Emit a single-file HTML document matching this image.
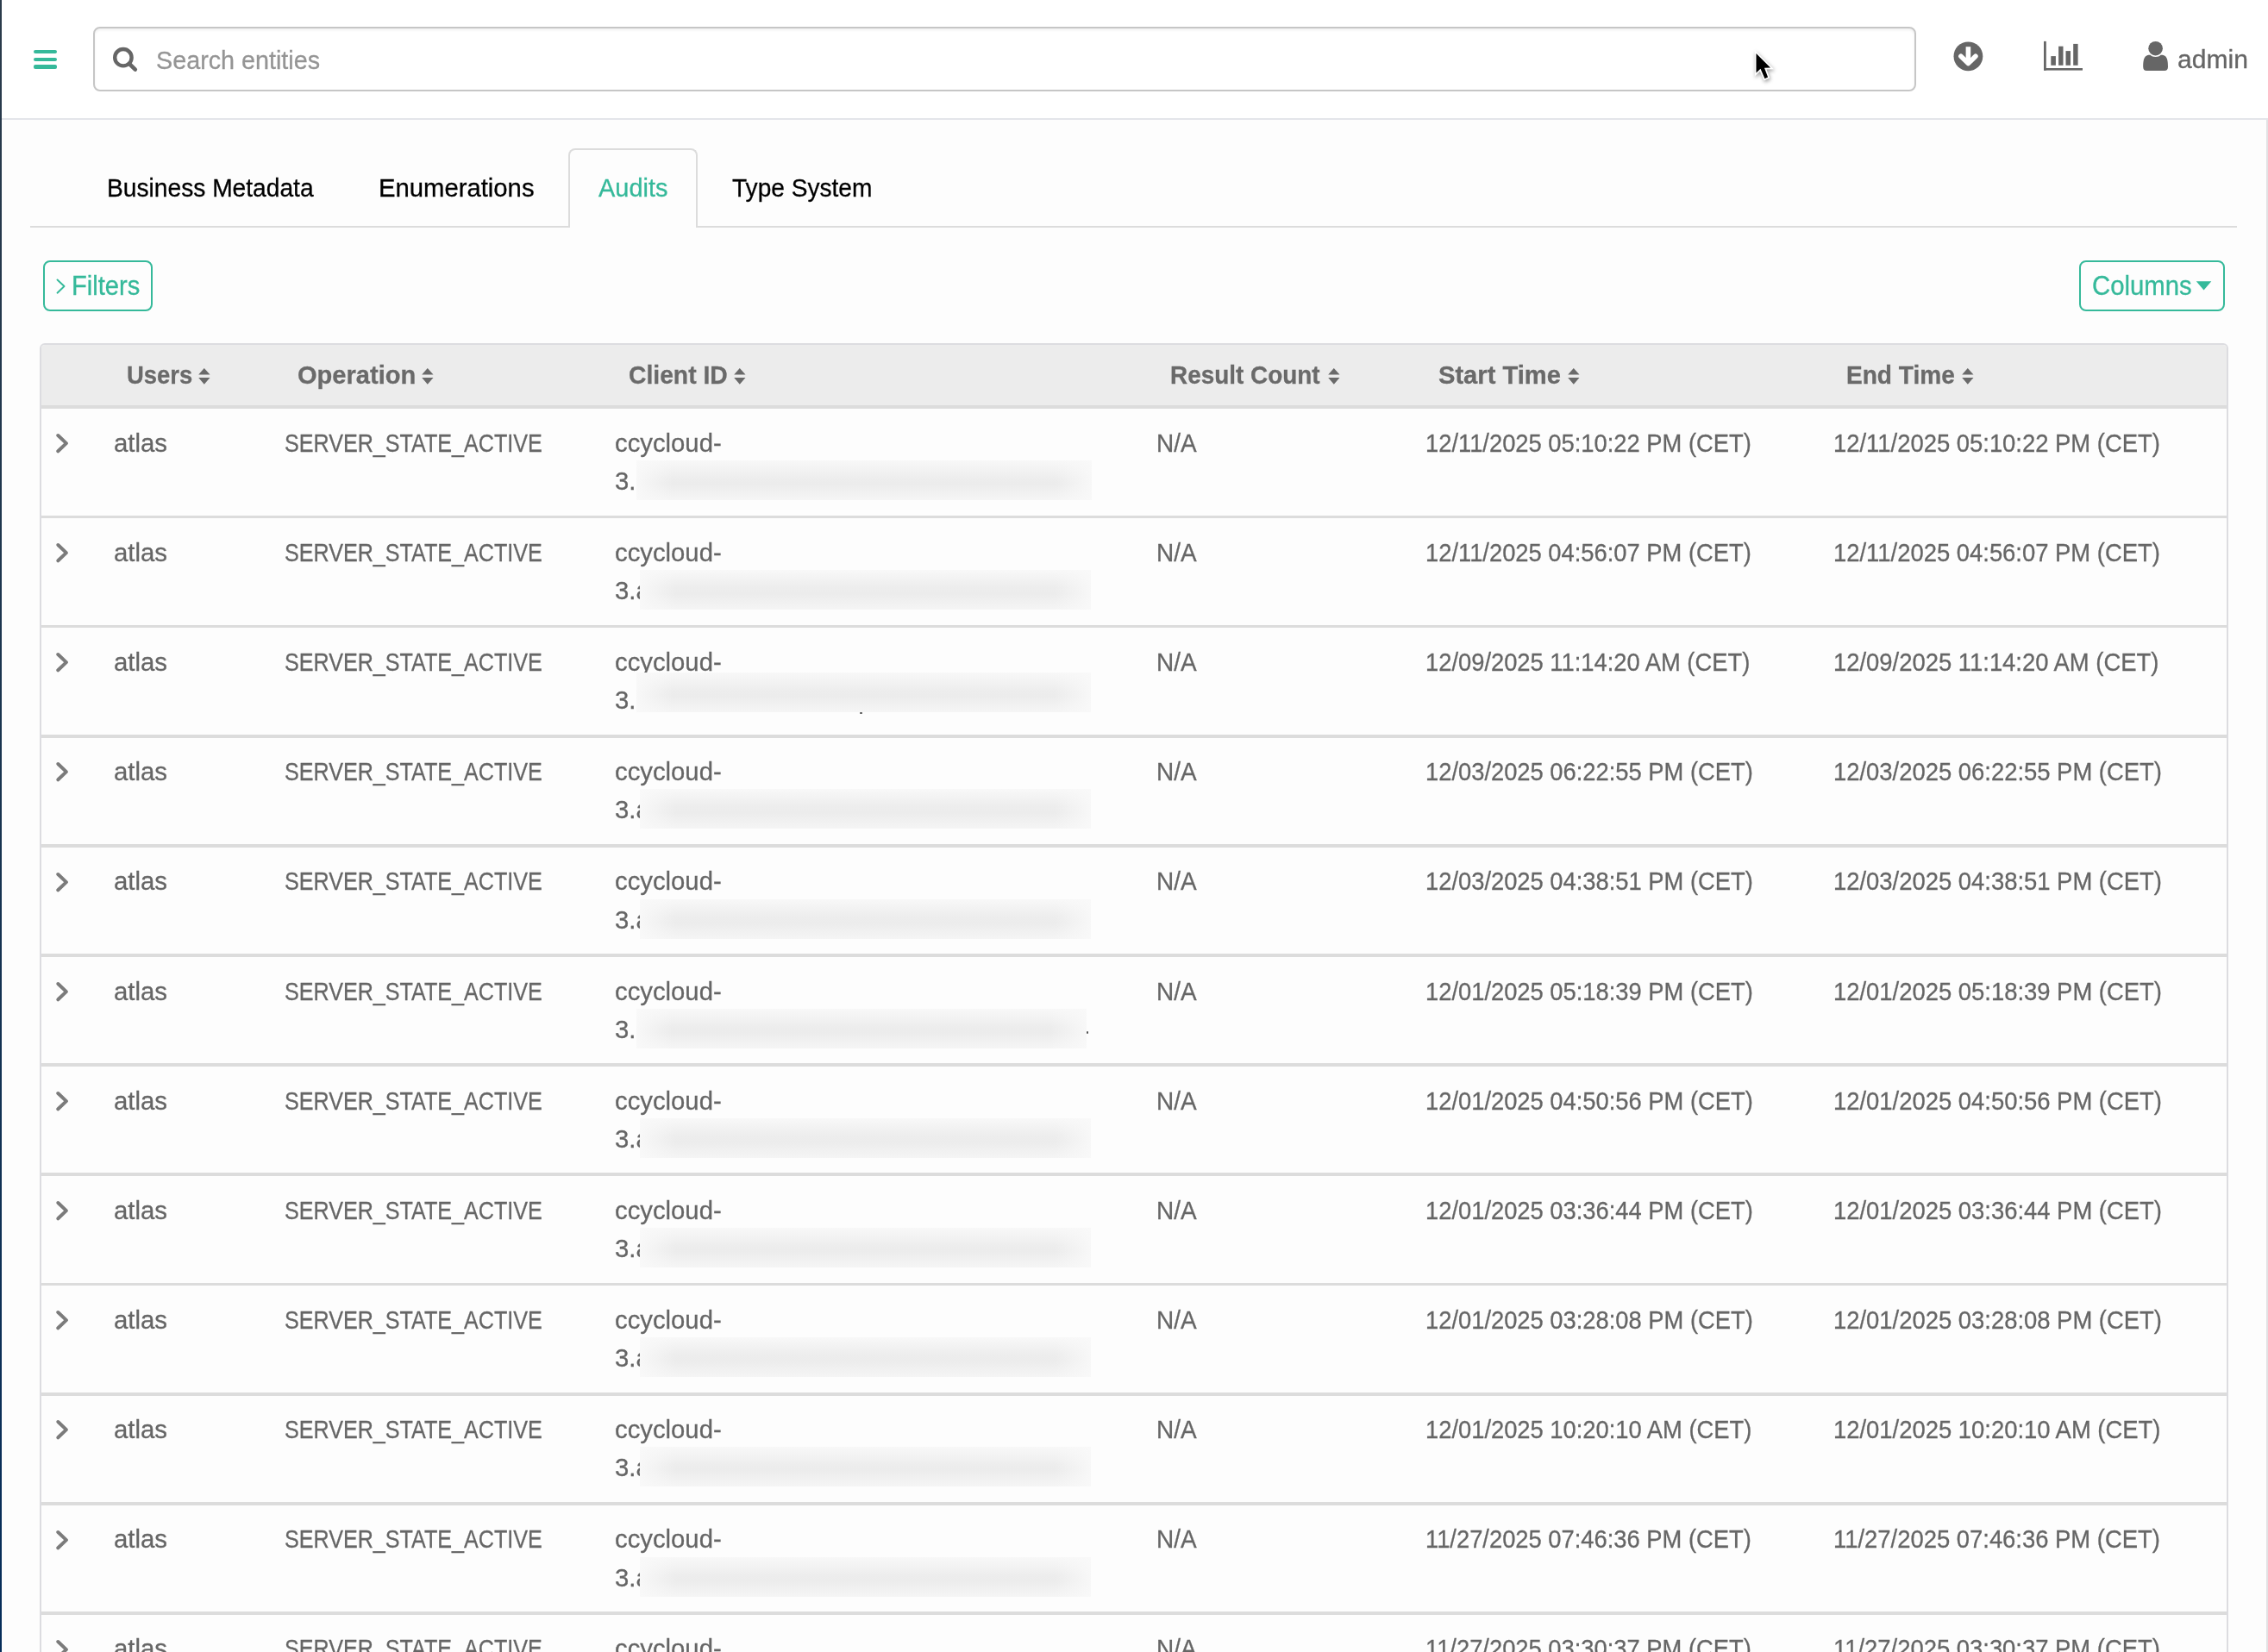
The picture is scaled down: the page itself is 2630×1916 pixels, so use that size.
<!DOCTYPE html>
<html><head><meta charset="utf-8"><title>Audits</title>
<style>
html,body{margin:0;padding:0;}
body{width:2630px;height:1916px;position:relative;overflow:hidden;background:#fff;font-family:"Liberation Sans", sans-serif;}
.t{position:absolute;white-space:nowrap;line-height:1;transform-origin:0 0;font-family:"Liberation Sans", sans-serif;-webkit-text-stroke:0.3px currentColor;}
.leftbar{position:absolute;left:0;top:0;width:2px;height:1916px;background:linear-gradient(#2b3b4b,#183450 50%,#062d5a);}
.rightbar{position:absolute;left:2628px;top:139px;width:1.5px;height:1777px;background:#e2e2e4;}
.hdrline{position:absolute;left:2px;top:137px;width:2628px;height:2px;background:#e3e5ea;}
.ham{position:absolute;left:39px;width:27px;height:4.6px;border-radius:2px;background:#35b99a;}
.search{position:absolute;left:108px;top:31px;width:2110px;height:70.5px;border:2px solid #c6c6c6;border-radius:8px;box-shadow:inset 0 2px 3px rgba(0,0,0,0.06);}
.tabline{position:absolute;left:35px;top:261.5px;width:2559px;height:2px;background:#dcdcdc;}
.tabbox{position:absolute;left:658.5px;top:172px;width:146px;height:89.5px;border:2px solid #dcdcdc;border-bottom:none;border-radius:8px 8px 0 0;background:#fdfdfd;}
.btn{position:absolute;top:302.2px;height:54.6px;border:2px solid #35b99a;border-radius:8px;}
.table{position:absolute;left:46px;top:398px;width:2534px;height:1600px;border:2px solid #dcdce0;border-radius:6px 6px 0 0;}
.thead{position:absolute;left:48px;top:400px;width:2534px;height:70px;background:#ececec;border-radius:4px 4px 0 0;}
.thline{position:absolute;left:48px;top:470px;width:2534px;height:3.8px;background:#dcdcdc;}
.sep{position:absolute;left:48px;width:2534px;height:3.8px;background:#dcdcdc;}
.chev,.sort{position:absolute;}
.blur{position:absolute;background:linear-gradient(to right,rgba(249,249,249,0.9),rgba(249,249,249,0) 8%,rgba(249,249,249,0) 92%,rgba(249,249,249,0.9)),linear-gradient(to bottom,#f8f8f8,#ededed 45%,#ececec 60%,#f5f5f5);}
</style></head><body>
<div style="position:absolute;left:0;top:139px;width:2630px;height:1777px;background:#fdfdfd"></div>
<div class="leftbar"></div>
<div class="hdrline"></div>
<div class="rightbar"></div>
<div class="ham" style="top:57.8px"></div>
<div class="ham" style="top:66.6px"></div>
<div class="ham" style="top:75.4px"></div>
<div class="search"></div>
<svg style="position:absolute;left:125px;top:49px" width="40" height="40" viewBox="0 0 40 40"><circle cx="17.9" cy="17.7" r="9.7" fill="none" stroke="#666" stroke-width="4.4"/><path d="M25 25 L31.8 31.6" stroke="#666" stroke-width="4.6" stroke-linecap="round"/></svg>
<svg style="position:absolute;left:2265px;top:47.5px" width="35" height="35" viewBox="0 0 35 35"><circle cx="17.4" cy="17.3" r="16.9" fill="#666"/><path d="M17.4 6.2 V24" stroke="#fff" stroke-width="5.6" stroke-linecap="butt"/><path d="M8.9 17.2 L17.4 25.6 L25.9 17.2" fill="none" stroke="#fff" stroke-width="5.6" stroke-linecap="round" stroke-linejoin="round"/></svg>
<svg style="position:absolute;left:2369px;top:47px" width="48" height="36" viewBox="0 0 48 36"><rect x="1" y="0.9" width="2.8" height="33.7" fill="#666"/><rect x="1" y="32" width="45" height="2.6" fill="#666"/><rect x="9.3" y="18.1" width="5.6" height="10.7" fill="#666"/><rect x="18.1" y="6.7" width="5.4" height="22.1" fill="#666"/><rect x="26.5" y="12.1" width="5.5" height="16.7" fill="#666"/><rect x="35.2" y="3.9" width="5.4" height="24.9" fill="#666"/></svg>
<svg style="position:absolute;left:2484px;top:47px" width="32" height="36" viewBox="0 0 32 36"><path d="M1.2 30.5 C1.2 24 2 20 4.5 18 C6 16.8 8 16.6 9.5 16.8 C11 18.3 13 19 15.6 19 C18.2 19 20.2 18.3 21.7 16.8 C23.2 16.6 25.2 16.8 26.7 18 C29.2 20 30 24 30 30.5 C30 33.5 28.5 35 26 35 L5.2 35 C2.7 35 1.2 33.5 1.2 30.5 Z" fill="#666"/><circle cx="15.6" cy="9.2" r="8.3" fill="#666"/></svg>
<div class="tabline"></div>
<div class="tabbox"></div>
<div class="btn" style="left:50.1px;width:122.7px"></div>
<svg style="position:absolute;left:62px;top:320px" width="18" height="24" viewBox="0 0 18 24"><path d="M4.5 4.5 L12.5 12 L4.5 19.7" fill="none" stroke="#35b99a" stroke-width="1.9" stroke-linecap="round" stroke-linejoin="round"/></svg>
<div class="btn" style="left:2411.2px;width:164.6px"></div>
<svg style="position:absolute;left:2545px;top:324px" width="22" height="14" viewBox="0 0 22 14"><path d="M1.8 2.3 L19.3 2.3 L10.55 12.4 Z" fill="#35b99a"/></svg>
<div class="table"></div>
<div class="thead"></div>
<div class="thline"></div>
<svg class="sort" style="left:229.80px;top:426px" width="14" height="20" viewBox="0 0 14 20"><path d="M0.2 8.5 L6.8 0.9 L13.5 8.5 Z M0.2 12 L13.5 12 L6.8 19.8 Z" fill="#6a6a6a"/></svg><svg class="sort" style="left:488.90px;top:426px" width="14" height="20" viewBox="0 0 14 20"><path d="M0.2 8.5 L6.8 0.9 L13.5 8.5 Z M0.2 12 L13.5 12 L6.8 19.8 Z" fill="#6a6a6a"/></svg><svg class="sort" style="left:850.80px;top:426px" width="14" height="20" viewBox="0 0 14 20"><path d="M0.2 8.5 L6.8 0.9 L13.5 8.5 Z M0.2 12 L13.5 12 L6.8 19.8 Z" fill="#6a6a6a"/></svg><svg class="sort" style="left:1539.60px;top:426px" width="14" height="20" viewBox="0 0 14 20"><path d="M0.2 8.5 L6.8 0.9 L13.5 8.5 Z M0.2 12 L13.5 12 L6.8 19.8 Z" fill="#6a6a6a"/></svg><svg class="sort" style="left:1817.60px;top:426px" width="14" height="20" viewBox="0 0 14 20"><path d="M0.2 8.5 L6.8 0.9 L13.5 8.5 Z M0.2 12 L13.5 12 L6.8 19.8 Z" fill="#6a6a6a"/></svg><svg class="sort" style="left:2274.90px;top:426px" width="14" height="20" viewBox="0 0 14 20"><path d="M0.2 8.5 L6.8 0.9 L13.5 8.5 Z M0.2 12 L13.5 12 L6.8 19.8 Z" fill="#6a6a6a"/></svg>
<div class="t" style="left:181.14px;top:54.60px;font-size:30px;color:#959595;transform:scaleX(0.9579)">Search entities</div>
<div class="t" style="left:2524.90px;top:53.90px;font-size:30px;color:#666;transform:scaleX(1.0038)">admin</div>
<div class="t" style="left:123.92px;top:203.20px;font-size:30px;color:#000;transform:scaleX(0.9391)">Business Metadata</div>
<div class="t" style="left:438.95px;top:203.20px;font-size:30px;color:#000;transform:scaleX(0.9753)">Enumerations</div>
<div class="t" style="left:693.70px;top:203.20px;font-size:30px;color:#35b99a;transform:scaleX(0.9651)">Audits</div>
<div class="t" style="left:848.66px;top:203.20px;font-size:30px;color:#000;transform:scaleX(0.9363)">Type System</div>
<div class="t" style="left:82.62px;top:316.37px;font-size:31px;color:#35b99a;transform:scaleX(0.9402)">Filters</div>
<div class="t" style="left:2425.91px;top:316.47px;font-size:31px;color:#35b99a;transform:scaleX(0.9462)">Columns</div>
<div class="t" style="left:146.87px;top:420.40px;font-size:30px;font-weight:700;color:#6a6a6a;transform:scaleX(0.9137)">Users</div>
<div class="t" style="left:344.63px;top:420.40px;font-size:30px;font-weight:700;color:#6a6a6a;transform:scaleX(0.9691)">Operation</div>
<div class="t" style="left:728.66px;top:420.40px;font-size:30px;font-weight:700;color:#6a6a6a;transform:scaleX(0.9425)">Client ID</div>
<div class="t" style="left:1356.64px;top:420.40px;font-size:30px;font-weight:700;color:#6a6a6a;transform:scaleX(0.9297)">Result Count</div>
<div class="t" style="left:1667.93px;top:420.40px;font-size:30px;font-weight:700;color:#6a6a6a;transform:scaleX(0.9708)">Start Time</div>
<div class="t" style="left:2141.43px;top:420.40px;font-size:30px;font-weight:700;color:#6a6a6a;transform:scaleX(0.9356)">End Time</div>
<svg class="chev" style="left:60px;top:500.00px" width="24" height="28" viewBox="0 0 24 28"><path d="M7.3 5.0 L16.9 14.1 L7.3 23.3" fill="none" stroke="#7b7b7b" stroke-width="4" stroke-linecap="round" stroke-linejoin="round"/></svg>
<div class="t" style="left:131.82px;top:498.70px;font-size:30px;color:#666;transform:scaleX(0.9787)">atlas</div>
<div class="t" style="left:329.76px;top:498.70px;font-size:30px;color:#666;transform:scaleX(0.8375)">SERVER_STATE_ACTIVE</div>
<div class="t" style="left:712.82px;top:498.70px;font-size:30px;color:#666;transform:scaleX(0.9760)">ccycloud-</div>
<div class="t" style="left:712.82px;top:542.90px;font-size:30px;color:#666;transform:scaleX(0.9760)">3.a</div>
<div class="blur" style="left:738px;top:534.00px;width:528px;height:46px"></div>
<div class="t" style="left:1341.04px;top:498.70px;font-size:30px;color:#666;transform:scaleX(0.9313)">N/A</div>
<div class="t" style="left:1653.18px;top:498.70px;font-size:30px;color:#666;transform:scaleX(0.9109)">12/11/2025 05:10:22 PM (CET)</div>
<div class="t" style="left:2126.17px;top:498.70px;font-size:30px;color:#666;transform:scaleX(0.9137)">12/11/2025 05:10:22 PM (CET)</div>
<div class="sep" style="top:597.50px"></div>
<svg class="chev" style="left:60px;top:627.16px" width="24" height="28" viewBox="0 0 24 28"><path d="M7.3 5.0 L16.9 14.1 L7.3 23.3" fill="none" stroke="#7b7b7b" stroke-width="4" stroke-linecap="round" stroke-linejoin="round"/></svg>
<div class="t" style="left:131.82px;top:625.86px;font-size:30px;color:#666;transform:scaleX(0.9787)">atlas</div>
<div class="t" style="left:329.76px;top:625.86px;font-size:30px;color:#666;transform:scaleX(0.8375)">SERVER_STATE_ACTIVE</div>
<div class="t" style="left:712.82px;top:625.86px;font-size:30px;color:#666;transform:scaleX(0.9760)">ccycloud-</div>
<div class="t" style="left:712.82px;top:670.06px;font-size:30px;color:#666;transform:scaleX(0.9760)">3.a</div>
<div class="blur" style="left:742px;top:661.16px;width:523px;height:46px"></div>
<div class="t" style="left:1341.04px;top:625.86px;font-size:30px;color:#666;transform:scaleX(0.9313)">N/A</div>
<div class="t" style="left:1653.18px;top:625.86px;font-size:30px;color:#666;transform:scaleX(0.9109)">12/11/2025 04:56:07 PM (CET)</div>
<div class="t" style="left:2126.17px;top:625.86px;font-size:30px;color:#666;transform:scaleX(0.9137)">12/11/2025 04:56:07 PM (CET)</div>
<div class="sep" style="top:724.66px"></div>
<svg class="chev" style="left:60px;top:754.32px" width="24" height="28" viewBox="0 0 24 28"><path d="M7.3 5.0 L16.9 14.1 L7.3 23.3" fill="none" stroke="#7b7b7b" stroke-width="4" stroke-linecap="round" stroke-linejoin="round"/></svg>
<div class="t" style="left:131.82px;top:753.02px;font-size:30px;color:#666;transform:scaleX(0.9787)">atlas</div>
<div class="t" style="left:329.76px;top:753.02px;font-size:30px;color:#666;transform:scaleX(0.8375)">SERVER_STATE_ACTIVE</div>
<div class="t" style="left:712.82px;top:753.02px;font-size:30px;color:#666;transform:scaleX(0.9760)">ccycloud-</div>
<div class="t" style="left:712.82px;top:797.22px;font-size:30px;color:#666;transform:scaleX(0.9760)">3.a</div>
<div class="blur" style="left:738px;top:779.72px;width:527px;height:46px"></div>
<div class="t" style="left:1341.04px;top:753.02px;font-size:30px;color:#666;transform:scaleX(0.9313)">N/A</div>
<div class="t" style="left:1653.18px;top:753.02px;font-size:30px;color:#666;transform:scaleX(0.9109)">12/09/2025 11:14:20 AM (CET)</div>
<div class="t" style="left:2126.17px;top:753.02px;font-size:30px;color:#666;transform:scaleX(0.9137)">12/09/2025 11:14:20 AM (CET)</div>
<div class="sep" style="top:851.82px"></div>
<svg class="chev" style="left:60px;top:881.48px" width="24" height="28" viewBox="0 0 24 28"><path d="M7.3 5.0 L16.9 14.1 L7.3 23.3" fill="none" stroke="#7b7b7b" stroke-width="4" stroke-linecap="round" stroke-linejoin="round"/></svg>
<div class="t" style="left:131.82px;top:880.18px;font-size:30px;color:#666;transform:scaleX(0.9787)">atlas</div>
<div class="t" style="left:329.76px;top:880.18px;font-size:30px;color:#666;transform:scaleX(0.8375)">SERVER_STATE_ACTIVE</div>
<div class="t" style="left:712.82px;top:880.18px;font-size:30px;color:#666;transform:scaleX(0.9760)">ccycloud-</div>
<div class="t" style="left:712.82px;top:924.38px;font-size:30px;color:#666;transform:scaleX(0.9760)">3.a</div>
<div class="blur" style="left:742px;top:915.48px;width:523px;height:46px"></div>
<div class="t" style="left:1341.04px;top:880.18px;font-size:30px;color:#666;transform:scaleX(0.9313)">N/A</div>
<div class="t" style="left:1653.18px;top:880.18px;font-size:30px;color:#666;transform:scaleX(0.9109)">12/03/2025 06:22:55 PM (CET)</div>
<div class="t" style="left:2126.17px;top:880.18px;font-size:30px;color:#666;transform:scaleX(0.9137)">12/03/2025 06:22:55 PM (CET)</div>
<div class="sep" style="top:978.98px"></div>
<svg class="chev" style="left:60px;top:1008.64px" width="24" height="28" viewBox="0 0 24 28"><path d="M7.3 5.0 L16.9 14.1 L7.3 23.3" fill="none" stroke="#7b7b7b" stroke-width="4" stroke-linecap="round" stroke-linejoin="round"/></svg>
<div class="t" style="left:131.82px;top:1007.34px;font-size:30px;color:#666;transform:scaleX(0.9787)">atlas</div>
<div class="t" style="left:329.76px;top:1007.34px;font-size:30px;color:#666;transform:scaleX(0.8375)">SERVER_STATE_ACTIVE</div>
<div class="t" style="left:712.82px;top:1007.34px;font-size:30px;color:#666;transform:scaleX(0.9760)">ccycloud-</div>
<div class="t" style="left:712.82px;top:1051.54px;font-size:30px;color:#666;transform:scaleX(0.9760)">3.a</div>
<div class="blur" style="left:742px;top:1042.64px;width:523px;height:46px"></div>
<div class="t" style="left:1341.04px;top:1007.34px;font-size:30px;color:#666;transform:scaleX(0.9313)">N/A</div>
<div class="t" style="left:1653.18px;top:1007.34px;font-size:30px;color:#666;transform:scaleX(0.9109)">12/03/2025 04:38:51 PM (CET)</div>
<div class="t" style="left:2126.17px;top:1007.34px;font-size:30px;color:#666;transform:scaleX(0.9137)">12/03/2025 04:38:51 PM (CET)</div>
<div class="sep" style="top:1106.14px"></div>
<svg class="chev" style="left:60px;top:1135.80px" width="24" height="28" viewBox="0 0 24 28"><path d="M7.3 5.0 L16.9 14.1 L7.3 23.3" fill="none" stroke="#7b7b7b" stroke-width="4" stroke-linecap="round" stroke-linejoin="round"/></svg>
<div class="t" style="left:131.82px;top:1134.50px;font-size:30px;color:#666;transform:scaleX(0.9787)">atlas</div>
<div class="t" style="left:329.76px;top:1134.50px;font-size:30px;color:#666;transform:scaleX(0.8375)">SERVER_STATE_ACTIVE</div>
<div class="t" style="left:712.82px;top:1134.50px;font-size:30px;color:#666;transform:scaleX(0.9760)">ccycloud-</div>
<div class="t" style="left:712.82px;top:1178.70px;font-size:30px;color:#666;transform:scaleX(0.9760)">3.a</div>
<div class="blur" style="left:738px;top:1170.00px;width:522px;height:46px"></div>
<div class="t" style="left:1341.04px;top:1134.50px;font-size:30px;color:#666;transform:scaleX(0.9313)">N/A</div>
<div class="t" style="left:1653.18px;top:1134.50px;font-size:30px;color:#666;transform:scaleX(0.9109)">12/01/2025 05:18:39 PM (CET)</div>
<div class="t" style="left:2126.17px;top:1134.50px;font-size:30px;color:#666;transform:scaleX(0.9137)">12/01/2025 05:18:39 PM (CET)</div>
<div class="sep" style="top:1233.30px"></div>
<svg class="chev" style="left:60px;top:1262.96px" width="24" height="28" viewBox="0 0 24 28"><path d="M7.3 5.0 L16.9 14.1 L7.3 23.3" fill="none" stroke="#7b7b7b" stroke-width="4" stroke-linecap="round" stroke-linejoin="round"/></svg>
<div class="t" style="left:131.82px;top:1261.66px;font-size:30px;color:#666;transform:scaleX(0.9787)">atlas</div>
<div class="t" style="left:329.76px;top:1261.66px;font-size:30px;color:#666;transform:scaleX(0.8375)">SERVER_STATE_ACTIVE</div>
<div class="t" style="left:712.82px;top:1261.66px;font-size:30px;color:#666;transform:scaleX(0.9760)">ccycloud-</div>
<div class="t" style="left:712.82px;top:1305.86px;font-size:30px;color:#666;transform:scaleX(0.9760)">3.a</div>
<div class="blur" style="left:742px;top:1296.96px;width:523px;height:46px"></div>
<div class="t" style="left:1341.04px;top:1261.66px;font-size:30px;color:#666;transform:scaleX(0.9313)">N/A</div>
<div class="t" style="left:1653.18px;top:1261.66px;font-size:30px;color:#666;transform:scaleX(0.9109)">12/01/2025 04:50:56 PM (CET)</div>
<div class="t" style="left:2126.17px;top:1261.66px;font-size:30px;color:#666;transform:scaleX(0.9137)">12/01/2025 04:50:56 PM (CET)</div>
<div class="sep" style="top:1360.46px"></div>
<svg class="chev" style="left:60px;top:1390.12px" width="24" height="28" viewBox="0 0 24 28"><path d="M7.3 5.0 L16.9 14.1 L7.3 23.3" fill="none" stroke="#7b7b7b" stroke-width="4" stroke-linecap="round" stroke-linejoin="round"/></svg>
<div class="t" style="left:131.82px;top:1388.82px;font-size:30px;color:#666;transform:scaleX(0.9787)">atlas</div>
<div class="t" style="left:329.76px;top:1388.82px;font-size:30px;color:#666;transform:scaleX(0.8375)">SERVER_STATE_ACTIVE</div>
<div class="t" style="left:712.82px;top:1388.82px;font-size:30px;color:#666;transform:scaleX(0.9760)">ccycloud-</div>
<div class="t" style="left:712.82px;top:1433.02px;font-size:30px;color:#666;transform:scaleX(0.9760)">3.a</div>
<div class="blur" style="left:742px;top:1424.12px;width:523px;height:46px"></div>
<div class="t" style="left:1341.04px;top:1388.82px;font-size:30px;color:#666;transform:scaleX(0.9313)">N/A</div>
<div class="t" style="left:1653.18px;top:1388.82px;font-size:30px;color:#666;transform:scaleX(0.9109)">12/01/2025 03:36:44 PM (CET)</div>
<div class="t" style="left:2126.17px;top:1388.82px;font-size:30px;color:#666;transform:scaleX(0.9137)">12/01/2025 03:36:44 PM (CET)</div>
<div class="sep" style="top:1487.62px"></div>
<svg class="chev" style="left:60px;top:1517.28px" width="24" height="28" viewBox="0 0 24 28"><path d="M7.3 5.0 L16.9 14.1 L7.3 23.3" fill="none" stroke="#7b7b7b" stroke-width="4" stroke-linecap="round" stroke-linejoin="round"/></svg>
<div class="t" style="left:131.82px;top:1515.98px;font-size:30px;color:#666;transform:scaleX(0.9787)">atlas</div>
<div class="t" style="left:329.76px;top:1515.98px;font-size:30px;color:#666;transform:scaleX(0.8375)">SERVER_STATE_ACTIVE</div>
<div class="t" style="left:712.82px;top:1515.98px;font-size:30px;color:#666;transform:scaleX(0.9760)">ccycloud-</div>
<div class="t" style="left:712.82px;top:1560.18px;font-size:30px;color:#666;transform:scaleX(0.9760)">3.a</div>
<div class="blur" style="left:742px;top:1551.28px;width:523px;height:46px"></div>
<div class="t" style="left:1341.04px;top:1515.98px;font-size:30px;color:#666;transform:scaleX(0.9313)">N/A</div>
<div class="t" style="left:1653.18px;top:1515.98px;font-size:30px;color:#666;transform:scaleX(0.9109)">12/01/2025 03:28:08 PM (CET)</div>
<div class="t" style="left:2126.17px;top:1515.98px;font-size:30px;color:#666;transform:scaleX(0.9137)">12/01/2025 03:28:08 PM (CET)</div>
<div class="sep" style="top:1614.78px"></div>
<svg class="chev" style="left:60px;top:1644.44px" width="24" height="28" viewBox="0 0 24 28"><path d="M7.3 5.0 L16.9 14.1 L7.3 23.3" fill="none" stroke="#7b7b7b" stroke-width="4" stroke-linecap="round" stroke-linejoin="round"/></svg>
<div class="t" style="left:131.82px;top:1643.14px;font-size:30px;color:#666;transform:scaleX(0.9787)">atlas</div>
<div class="t" style="left:329.76px;top:1643.14px;font-size:30px;color:#666;transform:scaleX(0.8375)">SERVER_STATE_ACTIVE</div>
<div class="t" style="left:712.82px;top:1643.14px;font-size:30px;color:#666;transform:scaleX(0.9760)">ccycloud-</div>
<div class="t" style="left:712.82px;top:1687.34px;font-size:30px;color:#666;transform:scaleX(0.9760)">3.a</div>
<div class="blur" style="left:742px;top:1678.44px;width:523px;height:46px"></div>
<div class="t" style="left:1341.04px;top:1643.14px;font-size:30px;color:#666;transform:scaleX(0.9313)">N/A</div>
<div class="t" style="left:1653.18px;top:1643.14px;font-size:30px;color:#666;transform:scaleX(0.9109)">12/01/2025 10:20:10 AM (CET)</div>
<div class="t" style="left:2126.17px;top:1643.14px;font-size:30px;color:#666;transform:scaleX(0.9137)">12/01/2025 10:20:10 AM (CET)</div>
<div class="sep" style="top:1741.94px"></div>
<svg class="chev" style="left:60px;top:1771.60px" width="24" height="28" viewBox="0 0 24 28"><path d="M7.3 5.0 L16.9 14.1 L7.3 23.3" fill="none" stroke="#7b7b7b" stroke-width="4" stroke-linecap="round" stroke-linejoin="round"/></svg>
<div class="t" style="left:131.82px;top:1770.30px;font-size:30px;color:#666;transform:scaleX(0.9787)">atlas</div>
<div class="t" style="left:329.76px;top:1770.30px;font-size:30px;color:#666;transform:scaleX(0.8375)">SERVER_STATE_ACTIVE</div>
<div class="t" style="left:712.82px;top:1770.30px;font-size:30px;color:#666;transform:scaleX(0.9760)">ccycloud-</div>
<div class="t" style="left:712.82px;top:1814.50px;font-size:30px;color:#666;transform:scaleX(0.9760)">3.a</div>
<div class="blur" style="left:742px;top:1805.60px;width:523px;height:46px"></div>
<div class="t" style="left:1341.04px;top:1770.30px;font-size:30px;color:#666;transform:scaleX(0.9313)">N/A</div>
<div class="t" style="left:1653.18px;top:1770.30px;font-size:30px;color:#666;transform:scaleX(0.9109)">11/27/2025 07:46:36 PM (CET)</div>
<div class="t" style="left:2126.17px;top:1770.30px;font-size:30px;color:#666;transform:scaleX(0.9137)">11/27/2025 07:46:36 PM (CET)</div>
<div class="sep" style="top:1869.10px"></div>
<svg class="chev" style="left:60px;top:1898.76px" width="24" height="28" viewBox="0 0 24 28"><path d="M7.3 5.0 L16.9 14.1 L7.3 23.3" fill="none" stroke="#7b7b7b" stroke-width="4" stroke-linecap="round" stroke-linejoin="round"/></svg>
<div class="t" style="left:131.82px;top:1897.46px;font-size:30px;color:#666;transform:scaleX(0.9787)">atlas</div>
<div class="t" style="left:329.76px;top:1897.46px;font-size:30px;color:#666;transform:scaleX(0.8375)">SERVER_STATE_ACTIVE</div>
<div class="t" style="left:712.82px;top:1897.46px;font-size:30px;color:#666;transform:scaleX(0.9760)">ccycloud-</div>
<div class="t" style="left:712.82px;top:1941.66px;font-size:30px;color:#666;transform:scaleX(0.9760)">3.a</div>
<div class="blur" style="left:742px;top:1932.76px;width:523px;height:46px"></div>
<div class="t" style="left:1341.04px;top:1897.46px;font-size:30px;color:#666;transform:scaleX(0.9313)">N/A</div>
<div class="t" style="left:1653.18px;top:1897.46px;font-size:30px;color:#666;transform:scaleX(0.9109)">11/27/2025 03:30:37 PM (CET)</div>
<div class="t" style="left:2126.17px;top:1897.46px;font-size:30px;color:#666;transform:scaleX(0.9137)">11/27/2025 03:30:37 PM (CET)</div>
<div class="sep" style="top:1996.26px"></div>
<div style="position:absolute;left:997px;top:825.8px;width:3px;height:2.4px;background:#555;border-radius:1px"></div>
<div style="position:absolute;left:1260px;top:1195.8px;width:2px;height:3px;background:#555;border-radius:1px"></div>
<svg style="position:absolute;left:2030px;top:56px;filter:drop-shadow(1px 2.5px 2px rgba(0,0,0,0.38))" width="32" height="42" viewBox="0 0 32 42"><path d="M6.5 6.1 L6.5 28.5 L11.5 23.8 L16.5 35.3 L20.1 33.5 L16 22.7 L23 22.6 Z" fill="#000" stroke="#fff" stroke-width="3.4" stroke-linejoin="miter" paint-order="stroke"/></svg>
</body></html>
